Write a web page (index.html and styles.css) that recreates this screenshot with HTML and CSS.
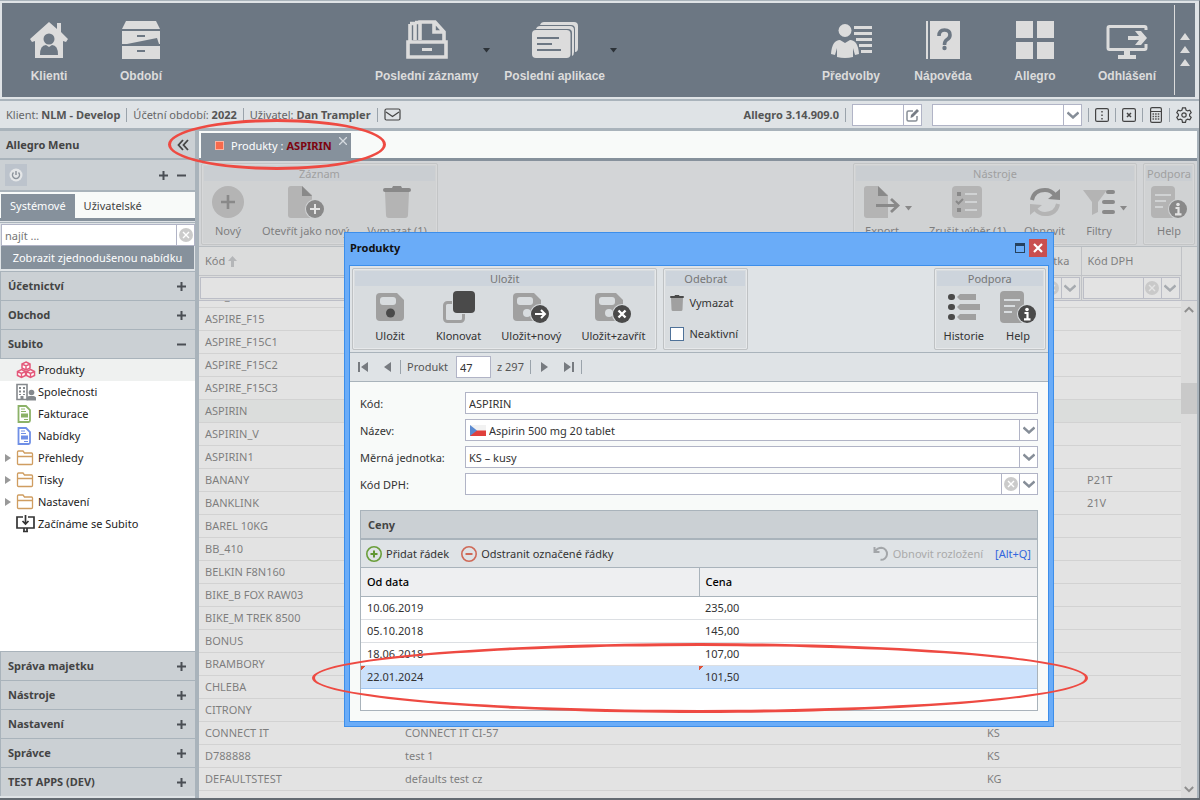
FILE: index.html
```
<!DOCTYPE html>
<html lang="cs">
<head>
    <meta charset="UTF-8">
    <meta name="viewport" content="width=device-width, initial-scale=1.0">
    <title>Allegro - Produkty</title>
    <link rel="stylesheet" href="styles.css">
</head>
<body>
    <!-- shared icons -->
    <svg class="sprite" aria-hidden="true">
        <symbol id="chevron" viewBox="0 0 12 8"><path d="M.5 1.500L6 6.500l5.500-5" fill="none" stroke="#868e98" stroke-width="2.400"/></symbol>
        <symbol id="clear" viewBox="0 0 14 14"><circle cx="7" cy="7" r="7" fill="#cbcbcb"/><path d="M4 4l6 6M10 4l-6 6" stroke="#fff" stroke-width="1.400"/></symbol>
        <symbol id="plus" viewBox="0 0 9 9"><path d="M4.500 0v9M0 4.500h9" stroke="#4a4e54" stroke-width="2"/></symbol>
        <symbol id="minus" viewBox="0 0 9 9"><path d="M0 4.500h9" stroke="#4a4e54" stroke-width="2"/></symbol>
        <symbol id="arrow" viewBox="0 0 7 5"><path d="M0 0h7L3.500 4.500z" fill="currentColor"/></symbol>
        <symbol id="folder" viewBox="0 0 18 16"><path d="M1.500 14V2q0-1 1-1h4.500l1.500 2h7q1 0 1 1v9.500q0 1-1 1h-13q-1 0-1-1zM1.500 6.500h15" fill="#fff" stroke="#cf9d60" stroke-width="1.300"/></symbol>
        <symbol id="trash" viewBox="0 0 32 32"><path d="M4 6h24l-1 23q0 3-3 3H8q-3 0-3-3z" fill="#a0a0a0"/><path d="M4 2h7l1-2h8l1 2h7q2 0 2 2t-2 2H4q-2 0-2-2t2-2z" fill="#4a4a4a"/></symbol>
        <symbol id="help" viewBox="0 0 36 32"><rect width="24" height="32" rx="4" fill="#a0a0a0"/><path d="M4 9h16M4 15h11M4 21h8" stroke="#d8dcdf" stroke-width="2"/><circle cx="27" cy="23" r="10" fill="#d8dcdf"/><circle cx="27" cy="23" r="9" fill="#4a4a4a"/><circle cx="27" cy="18.500" r="1.800" fill="#fff"/><path d="M24.500 22h3v6M24 28.300h6.500" fill="none" stroke="#fff" stroke-width="2.200"/></symbol>
        <symbol id="disk" viewBox="0 0 36 32"><path d="M4 2h17l7 7v17q0 4-4 4H4q-4 0-4-4V6q0-4 4-4z" fill="#a0a0a0"/><rect x="4" y="6" width="16" height="8" rx="3" fill="#d8dcdf"/></symbol>
        <symbol id="doc" viewBox="0 0 14 18"><path d="M1.500 1h7.500l4 4v10.500q0 1.500-1.500 1.500h-10z" fill="#fff" stroke="currentColor" stroke-width="1.800"/><path d="M4 4h4M4 6.500h5" stroke="currentColor"/><path d="M4 8.500h7v4H4zM7 14h4v1H7z" fill="currentColor"/></symbol>
    </svg>

    <div class="app">
        <header class="ribbon">
            <nav class="nav-group">
                <button class="nav-item">
                    <svg width="40" height="40" viewBox="0 0 40 40"><path d="M20 3l8 7V4h4v9l7 7-2 3-3-1v17H6V22l-3 1-2-3z" fill="#dcdcdc"/><circle cx="20" cy="20" r="5.500" fill="#6c7783"/><path d="M11 36q0-10 6-10l3 2 3-2q6 0 6 10z" fill="#6c7783"/></svg>
                    <span>Klienti</span>
                </button>
                <button class="nav-item">
                    <svg width="40" height="40" viewBox="0 0 40 40"><path d="M5 2h30l4 8H1zM1 12h38v13l-1 0-2-6-30 6H1zM1 27h38v13H1z" fill="#dcdcdc"/><path d="M16 17h8M16 32h8" stroke="#6c7783" stroke-width="2"/></svg>
                    <span>Období</span>
                </button>
            </nav>
            <nav class="nav-group recent">
                <button class="nav-item">
                    <svg width="42" height="40" viewBox="0 0 42 40"><path d="M2 23h38v15H2zM4 22V5M9 21V4M4 4.500h5M9 3.500h5M14 21V3h15l9 10v9M28 3v10h10" fill="none" stroke="#dcdcdc" stroke-width="3.600"/><path d="M16 30.500h10" stroke="#dcdcdc" stroke-width="3"/></svg>
                    <span>Poslední záznamy</span>
                </button>
                <svg class="drop" width="7" height="5"><use href="#arrow"/></svg>
                <button class="nav-item">
                    <svg width="46" height="40" viewBox="0 0 46 40"><path d="M8 6q1-3 4-3h30q4 0 4 4v22q0 4-3 4V10q0-4-4-4z" fill="#dcdcdc"/><path d="M4 10q1-3 4-3h30q4 0 4 4v22q0 3-2 4V14q0-4-4-4z" fill="#dcdcdc"/><rect x="0" y="11" width="38.500" height="28" rx="4" fill="#dcdcdc"/><path d="M5 19h22M5 25h15M5 31h24" stroke="#6c7783" stroke-width="2"/></svg>
                    <span>Poslední aplikace</span>
                </button>
                <svg class="drop" width="7" height="5"><use href="#arrow"/></svg>
            </nav>
            <nav class="nav-group">
                <button class="nav-item">
                    <svg width="42" height="40" viewBox="0 0 42 40"><circle cx="15" cy="11.500" r="6.500" fill="#dcdcdc"/><path d="M1 35q1-14 9-14l5 3 5-3q8 0 9 14l-4 1-2-7v9q-8 2-16 0v-9l-2 7z" fill="#dcdcdc"/><path d="M24 8.500h18M24 14.500h18M26 20.500h16M29 26.500h13M31 32.500h11" stroke="#dcdcdc" stroke-width="3"/></svg>
                    <span>Předvolby</span>
                </button>
                <button class="nav-item">
                    <svg width="36" height="40" viewBox="0 0 36 40"><path d="M1 2h2v38H1zM5 2h30v38H5z" fill="#dcdcdc"/><path d="M14 17q0-6 5.500-6t5.500 5q0 3-3.500 5-2 1.500-2 5" fill="none" stroke="#6c7783" stroke-width="3.600"/><circle cx="19.500" cy="29" r="2.200" fill="#6c7783"/></svg>
                    <span>Nápověda</span>
                </button>
                <button class="nav-item">
                    <svg width="40" height="40" viewBox="0 0 40 40"><path d="M1 2h17v17H1zM22 2h17v17H22zM1 23h17v17H1zM22 23h17v17H22z" fill="#dcdcdc"/></svg>
                    <span>Allegro</span>
                </button>
                <button class="nav-item">
                    <svg width="42" height="40" viewBox="0 0 42 40"><path d="M40 11V9q0-1.500-1.500-1.500h-35Q2 7.500 2 9v20q0 1.500 1.500 1.500h35Q40 30.500 40 29v-4" fill="none" stroke="#dcdcdc" stroke-width="3"/><path d="M18 31h6v5h6v4H12v-4h6zM22 17h11l-4-5h6l6 7-6 7h-6l4-5H22z" fill="#dcdcdc"/></svg>
                    <span>Odhlášení</span>
                </button>
                <svg class="ribbon-up" width="22" height="90" viewBox="0 0 22 90"><path d="M1.500 0v90" stroke="#dcdcdc"/><path d="M7 35h10l-5-7zM7 48h10l-5-7zM7 61h10l-5-7z" fill="#dcdcdc"/></svg>
            </nav>
        </header>

        <div class="status">
            <span>Klient: <b>NLM - Develop</b></span><i class="sep"></i>
            <span>Účetní období: <b>2022</b></span><i class="sep"></i>
            <span>Uživatel: <b>Dan Trampler</b></span><i class="sep"></i>
            <svg width="17" height="14" viewBox="0 0 17 14"><rect x="1" y="1" width="15" height="11" rx="1.500" fill="none" stroke="#444" stroke-width="1.200"/><path d="M2 4l6.500 4.500L15 4" fill="none" stroke="#444" stroke-width="1.200"/></svg>
            <b class="version">Allegro 3.14.909.0</b><i class="sep"></i>
            <div class="field quick">
                <input type="text" aria-label="Rychlé zadání">
                <button class="trigger" aria-label="Upravit"><svg width="13" height="13" viewBox="0 0 13 13"><path d="M7 2H2.500Q1 2 1 3.500v7Q1 12 2.500 12h7q1.500 0 1.500-1.500V7" fill="none" stroke="#888e96" stroke-width="1.500"/><path d="M4.500 9l.5-3 6-6 2 2-6 6z" fill="#777d85"/></svg></button>
            </div>
            <div class="field search">
                <select aria-label="Vyhledat"><option></option></select>
                <span class="trigger"><svg width="12" height="8"><use href="#chevron"/></svg></span>
            </div>
            <i class="sep"></i>
            <svg width="14" height="14" viewBox="0 0 14 14"><rect x=".6" y=".6" width="12.800" height="12.800" rx="1.500" fill="none" stroke="#444" stroke-width="1.200"/><path d="M7 3v9" stroke="#555" stroke-width="1.600" stroke-dasharray="1.500 2"/></svg>
            <i class="sep"></i>
            <svg width="14" height="14" viewBox="0 0 14 14"><rect x=".6" y=".6" width="12.800" height="12.800" rx="1.500" fill="none" stroke="#444" stroke-width="1.200"/><path d="M5 5l4 4M9 5l-4 4" stroke="#444" stroke-width="1.500"/></svg>
            <i class="sep"></i>
            <svg width="14" height="16" viewBox="-1 0 14 16"><rect x=".6" y=".6" width="10.800" height="14.800" rx="1.500" fill="none" stroke="#444" stroke-width="1.200"/><path d="M1 4.500h10" stroke="#444"/><path d="M2.500 7h7M2.500 9.500h7M2.500 12h7" stroke="#555" stroke-width="1.700" stroke-dasharray="1.600 1"/></svg>
            <i class="sep"></i>
            <svg width="16" height="16" viewBox="0 0 16 16"><path d="M6.500.8h3l.5 2.200 1.600.9 2.200-.7 1.400 2.500-1.600 1.500v1.700l1.600 1.500-1.400 2.500-2.200-.7-1.600.9-.5 2.200h-3L6 13l-1.600-.9-2.200.7-1.400-2.500 1.600-1.500V7.200L.8 5.700l1.400-2.500 2.200.7L6 3z" fill="none" stroke="#444" stroke-width="1.200"/><circle cx="8" cy="8" r="2.200" fill="none" stroke="#444" stroke-width="1.200"/></svg>
        </div>

        <div class="workspace">
            <aside class="sidebar">
                <div class="side-title"><b>Allegro Menu</b><svg width="12" height="12" viewBox="0 0 12 12"><path d="M6 1L1.500 6 6 11M11 1L6.500 6l4.500 5" fill="none" stroke="#444" stroke-width="1.800"/></svg></div>
                <div class="side-tools">
                    <button class="power" aria-label="Vypnout"><svg width="14" height="14" viewBox="0 0 14 14"><circle cx="7" cy="7" r="6.500" fill="#e4e6e8"/><path d="M4.500 4.500a3.500 3.500 0 1 0 5 0M7 3v4" fill="none" stroke="#8d949c" stroke-width="1.500"/></svg></button>
                    <svg width="9" height="9"><use href="#plus"/></svg>
                    <svg width="9" height="9"><use href="#minus"/></svg>
                </div>
                <div class="side-tabs"><button class="active">Systémové</button><button>Uživatelské</button></div>
                <div class="side-find">
                    <div class="field">
                        <input type="text" placeholder="najít ..." aria-label="najít">
                        <button class="trigger" aria-label="Smazat"><svg width="14" height="14"><use href="#clear"/></svg></button>
                    </div>
                    <button class="simple-menu">Zobrazit zjednodušenou nabídku</button>
                </div>
                <div class="accordion">
                    <button class="section">Účetnictví<svg width="9" height="9"><use href="#plus"/></svg></button>
                    <button class="section">Obchod<svg width="9" height="9"><use href="#plus"/></svg></button>
                    <button class="section">Subito<svg width="9" height="9"><use href="#minus"/></svg></button>
                    <ul class="tree">
                        <li class="current"><svg width="20" height="18" viewBox="0 0 20 18"><g fill="#fff" stroke="#e4587a" stroke-width="1.500"><path d="M10 1l4 2v4l-4 2-4-2V3zM6 3l4 2 4-2M10 5v4"/><path d="M5.500 8.500l4 2v4l-4 2-4-2v-4zM1.500 10.500l4 2 4-2M5.500 12.500v4M14.500 8.500l4 2v4l-4 2-4-2v-4zM10.500 10.500l4 2 4-2M14.500 12.500v4"/></g></svg>Produkty</li>
                        <li><svg width="20" height="18" viewBox="0 0 20 18"><path d="M1 1.500h10v15H1z" fill="none" stroke="#85898d" stroke-width="1.600"/><path d="M4 4v8M8 4v8" stroke="#85898d" stroke-width="2" stroke-dasharray="2 1.500"/><path d="M4.500 13h3v4h-3z" fill="#85898d"/><circle cx="15.500" cy="9.500" r="2.800" fill="#85898d"/><path d="M10.500 17.500q0-4.500 3-4.500h4q3 0 3 4.500z" fill="#85898d"/></svg>Společnosti</li>
                        <li class="green"><svg width="20" height="18" viewBox="-1 0 20 18"><use href="#doc" width="14" height="18"/></svg>Fakturace</li>
                        <li class="blue"><svg width="20" height="18" viewBox="-1 0 20 18"><use href="#doc" width="14" height="18"/></svg>Nabídky</li>
                        <li class="branch"><svg width="20" height="16"><use href="#folder" width="18" height="16"/></svg>Přehledy</li>
                        <li class="branch"><svg width="20" height="16"><use href="#folder" width="18" height="16"/></svg>Tisky</li>
                        <li class="branch"><svg width="20" height="16"><use href="#folder" width="18" height="16"/></svg>Nastavení</li>
                        <li><svg width="20" height="18" viewBox="0 0 20 18"><path d="M7 2H1v11h17V2h-6M9.500 0v8M6.500 6l3 3 3-3M7 16.500h5M8 13v3M11 13v3" fill="none" stroke="#333" stroke-width="1.700"/></svg>Začínáme se Subito</li>
                    </ul>
                    <button class="section">Správa majetku<svg width="9" height="9"><use href="#plus"/></svg></button>
                    <button class="section">Nástroje<svg width="9" height="9"><use href="#plus"/></svg></button>
                    <button class="section">Nastavení<svg width="9" height="9"><use href="#plus"/></svg></button>
                    <button class="section">Správce<svg width="9" height="9"><use href="#plus"/></svg></button>
                    <button class="section">TEST APPS (DEV)<svg width="9" height="9"><use href="#plus"/></svg></button>
                </div>
            </aside>

            <main class="main">
                <div class="tabbar">
                    <div class="tab"><span class="tab-icon"></span>Produkty : <b>ASPIRIN</b><button class="tab-close" aria-label="Zavřít"><svg width="8" height="8" viewBox="0 0 8 8"><path d="M0 0l8 8M8 0L0 8" stroke="#d5dadf" stroke-width="1.300"/></svg></button></div>
                </div>

                <div class="list">
                    <div class="toolbar">
                        <fieldset class="group">
                            <legend>Záznam</legend>
                            <button class="tool"><svg width="32" height="32" viewBox="0 0 32 32"><circle cx="16" cy="16" r="16" fill="#a0a0a0"/><path d="M16 9v14M9 16h14" stroke="#4a4a4a" stroke-width="2.600"/></svg>Nový</button>
                            <button class="tool"><svg width="36" height="32" viewBox="0 0 36 32"><path d="M3 0h11l10 9v23H3q-3 0-3-3V3q0-3 3-3z" fill="#a0a0a0"/><path d="M14 0l10 10H14z" fill="#4a4a4a"/><circle cx="27" cy="23" r="10" fill="#d8dcdf"/><circle cx="27" cy="23" r="9" fill="#4a4a4a"/><path d="M27 18v10M22 23h10" stroke="#fff" stroke-width="2"/></svg>Otevřít jako nový</button>
                            <button class="tool"><svg width="32" height="32"><use href="#trash"/></svg>Vymazat (1)</button>
                        </fieldset>
                        <span class="spacer"></span>
                        <fieldset class="group">
                            <legend>Nástroje</legend>
                            <button class="tool"><svg width="36" height="32" viewBox="0 0 36 32"><path d="M3 0h11l10 9v23H3q-3 0-3-3V3q0-3 3-3z" fill="#a0a0a0"/><path d="M14 0l10 10H14z" fill="#4a4a4a"/><path d="M12 19.500h22M27 13l7 6.500-7 6.500" fill="none" stroke="#4a4a4a" stroke-width="2.800"/></svg>Export</button>
                            <svg class="drop" width="7" height="5"><use href="#arrow"/></svg>
                            <button class="tool"><svg width="30" height="32" viewBox="0 0 30 32"><rect width="30" height="32" rx="4" fill="#a0a0a0"/><path d="M5 6h4v4H5zM5 22h4v4H5z" fill="#4a4a4a"/><path d="M4 15l2.500 2.500L11 13" fill="none" stroke="#4a4a4a" stroke-width="2"/><path d="M13 8h12M13 16h12M13 24h12" stroke="#d8dcdf" stroke-width="2"/></svg>Zrušit výběr (1)</button>
                            <button class="tool"><svg width="32" height="32" viewBox="0 0 32 32"><path d="M3 14Q5 4 16 4q6 0 10 5" fill="none" stroke="#4a4a4a" stroke-width="4"/><path d="M31 3v11l-12-1z" fill="#4a4a4a"/><path d="M29 18q-2 10-13 10-6 0-10-5" fill="none" stroke="#a0a0a0" stroke-width="4"/><path d="M1 29V18l12 1z" fill="#a0a0a0"/></svg>Obnovit</button>
                            <button class="tool"><svg width="32" height="32" viewBox="0 0 32 32"><path d="M0 4h24l-9 12v10l-6 3V16z" fill="#a0a0a0"/><path d="M25 6h5M21 16h9M21 26h9" stroke="#4a4a4a" stroke-width="4" stroke-linecap="round"/></svg>Filtry</button>
                            <svg class="drop" width="7" height="5"><use href="#arrow"/></svg>
                        </fieldset>
                        <fieldset class="group narrow">
                            <legend>Podpora</legend>
                            <button class="tool"><svg width="36" height="32"><use href="#help"/></svg>Help</button>
                        </fieldset>
                    </div>

                    <div class="grid">
                        <table class="grid-head">
                            <colgroup><col class="c-code"><col><col class="c-unit"><col class="c-vat"><col class="c-scroll"></colgroup>
                            <tr>
                                <th>Kód <svg width="9" height="11" viewBox="0 0 9 11"><path d="M4.500 0L9 5H6v6H3V5H0z" fill="#a0a4a8"/></svg></th><th>Název</th><th>Měrná jednotka</th><th>Kód DPH</th><th></th>
                            </tr>
                            <tr class="filters">
                                <td><div class="field"><input type="text" aria-label="Filtr kód"></div></td>
                                <td><div class="field"><input type="text" aria-label="Filtr název"></div></td>
                                <td><div class="field"><select aria-label="Filtr jednotka"><option></option></select><span class="trigger"><svg width="14" height="14"><use href="#clear"/></svg></span><span class="trigger"><svg width="12" height="8"><use href="#chevron"/></svg></span></div></td>
                                <td><div class="field"><select aria-label="Filtr DPH"><option></option></select><span class="trigger"><svg width="14" height="14"><use href="#clear"/></svg></span><span class="trigger"><svg width="12" height="8"><use href="#chevron"/></svg></span></div></td>
                                <td></td>
                            </tr>
                        </table>
                        <div class="grid-body">
                            <div class="rows">
                                <table>
                                    <colgroup><col class="c-code"><col><col class="c-unit"><col class="c-vat"></colgroup>
                                    <tr><td>ASP_</td><td></td><td></td><td></td></tr>
                                    <tr><td>ASPIRE_F15</td><td></td><td></td><td></td></tr>
                                    <tr><td>ASPIRE_F15C1</td><td></td><td></td><td></td></tr>
                                    <tr><td>ASPIRE_F15C2</td><td></td><td></td><td></td></tr>
                                    <tr><td>ASPIRE_F15C3</td><td></td><td></td><td></td></tr>
                                    <tr class="current"><td>ASPIRIN</td><td></td><td></td><td></td></tr>
                                    <tr><td>ASPIRIN_V</td><td></td><td></td><td></td></tr>
                                    <tr><td>ASPIRIN1</td><td></td><td></td><td></td></tr>
                                    <tr><td>BANANY</td><td></td><td></td><td>P21T</td></tr>
                                    <tr><td>BANKLINK</td><td></td><td></td><td>21V</td></tr>
                                    <tr><td>BAREL 10KG</td><td></td><td></td><td></td></tr>
                                    <tr><td>BB_410</td><td></td><td></td><td></td></tr>
                                    <tr><td>BELKIN F8N160</td><td></td><td></td><td></td></tr>
                                    <tr><td>BIKE_B FOX RAW03</td><td></td><td></td><td></td></tr>
                                    <tr><td>BIKE_M TREK 8500</td><td></td><td></td><td></td></tr>
                                    <tr><td>BONUS</td><td></td><td></td><td></td></tr>
                                    <tr><td>BRAMBORY</td><td></td><td></td><td></td></tr>
                                    <tr><td>CHLEBA</td><td></td><td></td><td></td></tr>
                                    <tr><td>CITRONY</td><td></td><td></td><td></td></tr>
                                    <tr><td>CONNECT IT</td><td>CONNECT IT CI-57</td><td>KS</td><td></td></tr>
                                    <tr><td>D788888</td><td>test 1</td><td>KS</td><td></td></tr>
                                    <tr><td>DEFAULTSTEST</td><td>defaults test cz</td><td>KG</td><td></td></tr>
                                    <tr><td></td><td></td><td></td><td></td></tr>
                                </table>
                            </div>
                            <div class="scrollbar">
                                <svg width="10" height="7" viewBox="0 0 12 8"><path d="M1 7l5-5 5 5" fill="none" stroke="#555" stroke-width="2.400"/></svg>
                                <span class="thumb"></span>
                                <svg width="10" height="7" viewBox="0 0 12 8"><path d="M1 1l5 5 5-5" fill="none" stroke="#555" stroke-width="2.400"/></svg>
                            </div>
                        </div>
                    </div>
                    <div class="mask"></div>
                </div>

                <section class="dialog">
                    <div class="dialog-title">
                        <b>Produkty</b>
                        <button class="maximize" aria-label="Maximalizovat"></button>
                        <button class="close" aria-label="Zavřít"><svg width="10" height="10" viewBox="0 0 10 10"><path d="M1 1l8 8M9 1L1 9" stroke="#fff" stroke-width="2.200"/></svg></button>
                    </div>
                    <div class="dialog-body">
                        <div class="toolbar">
                            <fieldset class="group">
                                <legend>Uložit</legend>
                                <button class="tool wide"><svg width="28" height="32" viewBox="0 0 28 32"><use href="#disk" width="36" height="32"/><circle cx="14.500" cy="22" r="4.500" fill="#4a4a4a"/></svg>Uložit</button>
                                <button class="tool"><svg width="32" height="32" viewBox="0 0 32 32"><rect x="1.500" y="11.500" width="19" height="19" rx="3" fill="none" stroke="#a0a0a0" stroke-width="3"/><rect x="9" y="-1" width="24" height="24" rx="4" fill="#d8dcdf"/><rect x="10" y="0" width="22" height="22" rx="4" fill="#4a4a4a"/></svg>Klonovat</button>
                                <button class="tool"><svg width="36" height="32" viewBox="0 0 36 32"><use href="#disk"/><circle cx="14" cy="22" r="4" fill="#d8dcdf"/><circle cx="27" cy="23" r="10" fill="#d8dcdf"/><circle cx="27" cy="23" r="9" fill="#4a4a4a"/><path d="M22 23h9M28 19l4 4-4 4" fill="none" stroke="#fff" stroke-width="2"/></svg>Uložit+nový</button>
                                <button class="tool"><svg width="36" height="32" viewBox="0 0 36 32"><use href="#disk"/><circle cx="14" cy="22" r="4" fill="#d8dcdf"/><circle cx="27" cy="23" r="10" fill="#d8dcdf"/><circle cx="27" cy="23" r="9" fill="#4a4a4a"/><path d="M23.500 19.500l7 7M30.500 19.500l-7 7" stroke="#fff" stroke-width="2.400"/></svg>Uložit+zavřít</button>
                            </fieldset>
                            <fieldset class="group stack">
                                <legend>Odebrat</legend>
                                <button class="small-tool"><svg width="14" height="16" viewBox="2 0 28 32"><use href="#trash" width="32" height="32"/></svg>Vymazat</button>
                                <label class="small-tool"><input type="checkbox">Neaktivní</label>
                            </fieldset>
                            <span class="spacer"></span>
                            <fieldset class="group narrow">
                                <legend>Podpora</legend>
                                <button class="tool"><svg width="32" height="32" viewBox="0 0 32 32"><path d="M3 6h1M3 16h1M3 26h1" stroke="#4a4a4a" stroke-width="6" stroke-linecap="round"/><path d="M9 6l3-3h16v6H12zM9 16l3-3h20v6H12zM9 26l3-3h16v6H12z" fill="#a0a0a0"/></svg>Historie</button>
                                <button class="tool"><svg width="36" height="32"><use href="#help"/></svg>Help</button>
                            </fieldset>
                        </div>

                        <div class="pager">
                            <button aria-label="První"><svg width="11" height="10" viewBox="0 0 11 10"><path d="M0 0h2v10H0zM10 0v10L3 5z" fill="#777b80"/></svg></button>
                            <button aria-label="Předchozí"><svg width="11" height="10" viewBox="0 0 11 10"><path d="M9 0v10L2 5z" fill="#777b80"/></svg></button>
                            <i class="sep"></i>
                            <label for="page">Produkt</label>
                            <input type="text" id="page" value="47">
                            <span>z 297</span>
                            <i class="sep"></i>
                            <button aria-label="Další"><svg width="11" height="10" viewBox="0 0 11 10"><path d="M2 0v10l7-5z" fill="#777b80"/></svg></button>
                            <button aria-label="Poslední"><svg width="11" height="10" viewBox="0 0 11 10"><path d="M9 0h2v10H9zM1 0v10l7-5z" fill="#777b80"/></svg></button>
                            <i class="sep"></i>
                        </div>

                        <div class="form">
                            <label for="code">Kód:</label>
                            <div class="field"><input type="text" id="code" value="ASPIRIN"></div>
                            <label for="name">Název:</label>
                            <div class="field">
                                <svg class="flag" width="16" height="11" viewBox="0 0 16 11"><path d="M0 0h16v6H0z" fill="#f2f2f2"/><path d="M0 5.500h16V11H0z" fill="#e0403c"/><path d="M0 0l7 5.500L0 11z" fill="#5b8ad0"/></svg>
                                <select id="name"><option>Aspirin 500 mg 20 tablet</option></select>
                                <span class="trigger"><svg width="12" height="8"><use href="#chevron"/></svg></span>
                            </div>
                            <label for="unit">Měrná jednotka:</label>
                            <div class="field">
                                <select id="unit"><option>KS – kusy</option></select>
                                <span class="trigger"><svg width="12" height="8"><use href="#chevron"/></svg></span>
                            </div>
                            <label for="vat">Kód DPH:</label>
                            <div class="field">
                                <select id="vat"><option></option></select>
                                <span class="trigger"><svg width="14" height="14"><use href="#clear"/></svg></span>
                                <span class="trigger"><svg width="12" height="8"><use href="#chevron"/></svg></span>
                            </div>
                        </div>

                        <div class="prices">
                            <h2>Ceny</h2>
                            <div class="prices-tools">
                                <button><svg width="16" height="16" viewBox="0 0 16 16"><circle cx="8" cy="8" r="7.200" fill="none" stroke="#6a9e3a" stroke-width="1.600"/><path d="M8 4.500v7M4.500 8h7" stroke="#5f9632" stroke-width="2"/></svg>Přidat řádek</button>
                                <button><svg width="16" height="16" viewBox="0 0 16 16"><circle cx="8" cy="8" r="7.200" fill="none" stroke="#cf6a58" stroke-width="1.600"/><path d="M4.500 8h7" stroke="#cf6a58" stroke-width="2"/></svg>Odstranit označené řádky</button>
                                <span class="spacer"></span>
                                <button disabled><svg width="16" height="16" viewBox="0 0 16 16"><path d="M1.500 1v5h5M2 5.500Q4.500 1.800 8.500 1.800a6 6 0 1 1-1 12" fill="none" stroke="#a3a6a9" stroke-width="2"/></svg>Obnovit rozložení</button>
                                <a href="#">[Alt+Q]</a>
                            </div>
                            <table>
                                <tr><th>Od data</th><th>Cena</th></tr>
                                <tr><td>10.06.2019</td><td>235,00</td></tr>
                                <tr><td>05.10.2018</td><td>145,00</td></tr>
                                <tr><td>18.06.2018</td><td>107,00</td></tr>
                                <tr class="changed"><td>22.01.2024</td><td>101,50</td></tr>
                            </table>
                        </div>
                    </div>
                    <div class="mark mark-row"></div>
                </section>
                <div class="mark mark-tab"></div>
            </main>
        </div>
    </div>
</body>
</html>
```
FILE: styles.css
```
* {
    box-sizing: border-box;
}

body {
    margin: 0;
    font-family: "Noto Sans", sans-serif;
    font-size: 11px;
    line-height: 16px;
    color: #333;
    background-color: #646b72;
}

button, input, select {
    font: inherit;
    color: inherit;
    margin: 0;
    padding: 0;
    border: none;
    border-radius: 0;
    background: none;
}

button {
    cursor: pointer;
}

svg {
    flex: none;
}

.sprite {
    position: absolute;
    width: 0;
    height: 0;
}

.spacer {
    flex: 1;
}

.app {
    display: flex;
    flex-direction: column;
    height: 100vh;
    overflow: hidden;
    border-top: 1px solid #a9b3bb;
    border-right: 1px solid #646b72;
    border-bottom: 2px solid #646b72;
}

/* top ribbon */
.ribbon {
    display: flex;
    justify-content: space-between;
    height: 98px;
    flex: none;
    padding-left: 1px;
    background-color: #6c7783;
    border: 2px solid #dfe3e6;
    border-right-width: 4px;
}

.nav-group {
    display: flex;
}

.nav-item {
    display: flex;
    flex-direction: column;
    align-items: center;
    min-width: 92px;
    padding-top: 16px;
    color: #dcdcdc;
    font-family: "Liberation Sans", Arial, sans-serif;
    font-size: 12px;
    font-weight: bold;
}

.nav-item span {
    margin-top: 9px;
}

.drop {
    align-self: center;
    margin: 0 14px 0 5px;
    color: #2c3238;
}

.recent .drop:last-child {
    margin-right: 0;
}

.ribbon-up {
    margin-top: 2px;
}

/* status bar */
.status {
    display: flex;
    align-items: center;
    height: 32px;
    flex: none;
    padding: 1px 7px 0 6px;
    color: #666;
    background-color: #dfe3e6;
    border-top: 2px solid #a9b3bb;
    border-bottom: 3px solid #a9b3bb;
}

.status b {
    color: #555;
}

.sep {
    width: 1px;
    height: 14px;
    margin: 0 6px;
    background-color: #9aa3ab;
}

.version {
    margin-left: auto;
}

.field {
    display: flex;
    align-items: center;
    height: 22px;
    background-color: #fff;
    border: 1px solid #b1b4c6;
}

.field input, .field select {
    flex: 1;
    min-width: 0;
    height: 20px;
    padding: 0 3px;
    appearance: none;
    outline: none;
}

.trigger {
    display: flex;
    align-items: center;
    justify-content: center;
    width: 18px;
    height: 20px;
    flex: none;
    border-left: 1px solid #b1b4c6;
}

.quick {
    width: 70px;
}

.search {
    width: 150px;
    margin-left: 10px;
}

/* left menu */
.workspace {
    display: flex;
    flex: 1;
    min-height: 0;
}

.sidebar {
    display: flex;
    flex-direction: column;
    width: 199px;
    flex: none;
    padding-bottom: 2px;
    color: #444;
    background-color: #dfe3e6;
    border-right: 4px solid #a9b3bb;
}

.side-title {
    display: flex;
    align-items: center;
    justify-content: space-between;
    height: 29px;
    padding: 0 6px;
    background-color: #cbd0d4;
    border-bottom: 2px solid #a9b3bb;
}

.side-tools {
    display: flex;
    align-items: center;
    gap: 9px;
    height: 32px;
    padding: 0 9px 0 5px;
    background-color: #cbd0d4;
    border-bottom: 2px solid #a9b3bb;
}

.power {
    display: flex;
    align-items: center;
    justify-content: center;
    width: 22px;
    height: 22px;
    margin-right: auto;
    background-color: #bcc3cc;
}

.side-tabs {
    display: flex;
    height: 29px;
    padding: 2px 0 0 1px;
    background-color: #f8faf9;
    border-bottom: 3px solid #86919c;
}

.side-tabs button {
    padding: 0 9px;
}

.side-tabs .active {
    color: #fff;
    background-color: #86919c;
}

.side-find {
    padding: 1px 0 2px 1px;
    margin-top: 1px;
    border-top: 1px solid #a9b3bb;
}

.simple-menu {
    display: block;
    width: 100%;
    height: 23px;
    color: #fff;
    background-color: #86919c;
    border-right: 1px solid #dfe3e6;
}

.accordion {
    display: flex;
    flex-direction: column;
    flex: 1;
    min-height: 0;
}

.section {
    display: flex;
    align-items: center;
    justify-content: space-between;
    height: 29px;
    flex: none;
    padding: 0 9px 0 7px;
    text-align: left;
    font-weight: bold;
    background-color: #cbd0d4;
    border-top: 1px solid #a9b3bb;
    border-left: 1px solid #a9b3bb;
}

.tree {
    flex: 1;
    margin: 0;
    padding: 0;
    list-style: none;
    background-color: #fff;
    border-top: 1px solid #a9b3bb;
}

.tree li {
    display: flex;
    align-items: center;
    gap: 2px;
    height: 22px;
    padding-left: 16px;
    color: #222;
}

.tree .current {
    background-color: #eff1f0;
}

.tree .green svg {
    color: #8cb268;
}

.tree .blue svg {
    color: #6f8fe6;
}

.tree .branch {
    padding-left: 5px;
}

.tree .branch::before {
    content: "";
    width: 9px;
    height: 8px;
    background-color: #999;
    clip-path: polygon(0 0, 6px 4px, 0 8px);
}

/* tabs */
.main {
    position: relative;
    display: flex;
    flex-direction: column;
    flex: 1;
    min-width: 0;
    border-right: 2px solid #a9b3bb;
}

.tabbar {
    display: flex;
    height: 30px;
    flex: none;
    padding: 2px 0 0 2px;
    background-color: #f8faf9;
    border-bottom: 3px solid #86919c;
}

.tab {
    display: flex;
    align-items: center;
    gap: 3px;
    padding-left: 14px;
    color: #fff;
    background-color: #86919c;
}

.tab b {
    color: #7d0410;
}

.tab-icon {
    width: 9px;
    height: 9px;
    margin-right: 4px;
    background-color: #f76a4c;
    border: 1px solid #fbb3a2;
}

.tab-close {
    display: flex;
    align-self: flex-start;
    padding: 4px 4px 0;
}

/* product list */
.list {
    position: relative;
    display: flex;
    flex-direction: column;
    flex: 1;
    min-height: 0;
    background-color: #dfe3e6;
}

.mask {
    position: absolute;
    inset: 0;
    background-color: rgba(200, 200, 200, 0.5);
}

.toolbar {
    display: flex;
    gap: 6px;
    padding: 2px;
    background-color: #dfe3e6;
    border-bottom: 1px solid #a9b3bb;
}

.group {
    position: relative;
    display: flex;
    height: 82px;
    min-width: 0;
    margin: 0;
    padding: 17px 1px 0;
    background-color: #d8dcdf;
    border: 1px solid #bfc2c4;
    border-radius: 2px;
    box-shadow: inset 0 0 0 1px #e6e8ea;
}

.group legend {
    position: absolute;
    top: 2px;
    left: 2px;
    right: 2px;
    height: 15px;
    padding: 0;
    line-height: 15px;
    text-align: center;
    color: #777;
    background-color: #cdd4dc;
}

.tool {
    display: flex;
    flex-direction: column;
    align-items: center;
    gap: 5px;
    min-width: 42px;
    padding: 5px 9px 0;
    white-space: nowrap;
}

.dialog .tool {
    padding: 5px 10px 0;
}

.tool.wide {
    min-width: 72px;
}

.list .toolbar {
    padding: 2px 2px 1px;
}

.group .drop {
    margin: 0 8px 8px -4px;
    color: #4a4a4a;
}

.narrow .tool {
    padding: 5px 6px 0;
}

.dialog .narrow .tool {
    padding: 5px 8px 0;
}

.stack {
    flex-direction: column;
    padding: 24px 9px 0 6px;
    gap: 11px;
}

.small-tool {
    display: flex;
    align-items: center;
    gap: 5px;
    height: 20px;
}

.small-tool input {
    appearance: none;
    width: 14px;
    height: 14px;
    background-color: #fff;
    border: 1px solid #4f7299;
}

.grid {
    display: flex;
    flex-direction: column;
    flex: 1;
    min-height: 0;
}

.grid table {
    width: 100%;
    table-layout: fixed;
    border-collapse: collapse;
}

.c-code {
    width: 200px;
}

.c-unit, .c-vat {
    width: 100px;
}

.c-scroll {
    width: 16px;
}

.grid-head {
    background-color: #eff0f1;
    border-bottom: 1px solid #b1b4c6;
}

.grid-head th {
    height: 28px;
    padding: 0 6px;
    font-weight: normal;
    text-align: left;
    border-right: 1px solid #b9bdc4;
    border-bottom: 1px solid #b9bdc4;
}

.grid-head svg {
    vertical-align: middle;
}

.grid-head td {
    height: 25px;
    padding: 0 1px;
    border-right: 1px solid #b9bdc4;
}

.grid-head th:last-child, .grid-head td:last-child {
    border: none;
}

.grid-body {
    display: flex;
    flex: 1;
    min-height: 0;
}

.rows {
    flex: 1;
    overflow: hidden;
    background-color: #fff;
}

.rows table {
    margin-top: -16px;
}

.rows td {
    height: 23px;
    padding: 0 6px;
    border-bottom: 1px solid #dcdcdc;
}

.rows .current {
    background-color: #eff2f0;
}

.scrollbar {
    display: flex;
    flex-direction: column;
    align-items: center;
    justify-content: space-between;
    width: 16px;
    padding: 5px 0;
    background-color: #f1f1f1;
}

.thumb {
    width: 16px;
    height: 31px;
    margin-top: 70px;
    margin-bottom: auto;
    background-color: #cacaca;
}

/* product dialog */
.dialog {
    position: absolute;
    top: 101px;
    left: 2px;
    right: 0;
    width: 710px;
    margin: 0 auto;
    padding: 0 4px 4px;
    background-color: #6aacf8;
    border: 1px solid #3c8eea;
}

.dialog-title {
    display: flex;
    align-items: center;
    gap: 4px;
    height: 32px;
    padding: 0 2px 2px 1px;
    color: #111;
}

.dialog-title b {
    margin-right: auto;
}

.maximize {
    width: 10px;
    height: 10px;
    border: 1px solid #26425f;
    border-top-width: 3px;
}

.close {
    display: flex;
    align-items: center;
    justify-content: center;
    width: 18px;
    height: 18px;
    background-color: #c94f4f;
}

.dialog-body {
    background-color: #f8faf9;
    border: 1px solid #3c8eea;
}

.pager {
    display: flex;
    align-items: center;
    height: 29px;
    padding-left: 8px;
    color: #555;
    background-color: #dfe3e6;
    border-bottom: 1px solid #a9b3bb;
}

.pager button {
    display: flex;
    width: 24px;
}

.pager .sep {
    margin: 0 8px 0 0;
}

.pager button + .sep {
    margin: 0 6px 0 -6px;
}

.pager label {
    margin-right: 8px;
}

.pager input {
    width: 35px;
    height: 22px;
    margin-right: 6px;
    padding: 0 3px;
    color: #333;
    background-color: #fff;
    border: 1px solid #b1b4c6;
}

.pager span {
    margin-right: 6px;
}

.form {
    display: grid;
    grid-template-columns: 105px 1fr;
    align-items: center;
    row-gap: 5px;
    padding: 10px 10px 15px;
}

.form label, .form select, .form input {
    padding-top: 1px;
}

.flag {
    margin-left: 4px;
}

.prices {
    min-height: 201px;
    margin: 0 10px 10px;
    background-color: #fff;
    border: 1px solid #a9b3bb;
}

.prices h2 {
    height: 29px;
    margin: 0;
    padding: 0 7px;
    font-size: 11px;
    line-height: 28px;
    color: #444;
    background-color: #cbd0d4;
    border-bottom: 2px solid #a9b3bb;
}

.prices-tools {
    display: flex;
    align-items: center;
    gap: 12px;
    height: 28px;
    padding: 1px 6px 0 5px;
    background-color: #dfe3e6;
    border-bottom: 1px solid #a9b3bb;
}

.prices-tools button {
    display: flex;
    align-items: center;
    gap: 4px;
}

.prices-tools button:disabled {
    color: #aaa;
}

.prices-tools a {
    color: #3366dd;
    text-decoration: none;
}

.prices table {
    width: 100%;
    table-layout: fixed;
    border-collapse: collapse;
}

.prices th {
    height: 28px;
    padding: 0 6px;
    font-weight: 500;
    text-align: left;
    color: #000;
    background-color: #eeeff1;
    border-bottom: 1px solid #a9b3bb;
}

.prices th:first-child {
    border-right: 1px solid #a9b3bb;
}

.prices td {
    height: 23px;
    padding: 0 6px;
    border-bottom: 1px solid #dcdfe3;
}

.prices .changed td {
    background: #cbe1fb linear-gradient(135deg, #e05238 3px, transparent 3px) no-repeat;
    border-top: 1px solid #a3c8f2;
    border-bottom: 1px solid #a3c8f2;
}

/* red highlights */
.mark {
    position: absolute;
    border: 3px solid #ee4a42;
    border-radius: 50%;
    pointer-events: none;
}

.mark-tab {
    top: -12px;
    left: -31px;
    width: 218px;
    height: 51px;
}

.mark-row {
    left: -33px;
    right: -35px;
    bottom: 13px;
    height: 70px;
}
```
